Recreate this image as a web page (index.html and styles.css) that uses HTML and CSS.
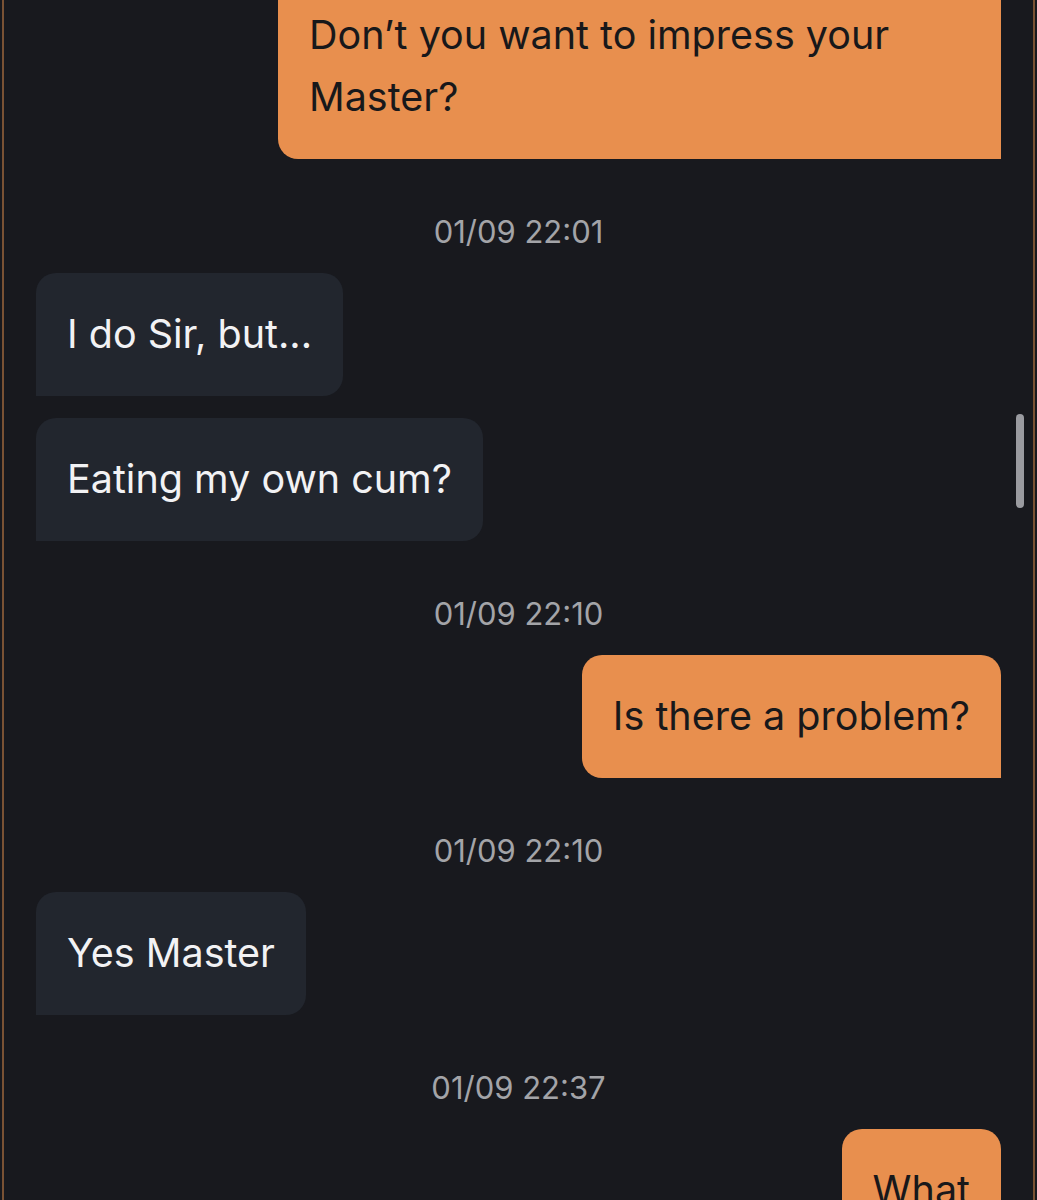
FILE: index.html
```html
<!DOCTYPE html>
<html lang="en">
<head>
  <meta charset="UTF-8" />
  <meta name="viewport" content="width=device-width, initial-scale=1.0"/>
  <title>Chat</title>
  <link rel="stylesheet" href="styles.css">
</head>
<body>

  <div class="frame">
    <div class="chat">
      <div class="bubble sent">Don’t you want to impress your Master?</div>

      <div class="time">01/09 22:01</div>
      <div class="bubble received">I do Sir, but...</div>
      <div class="bubble received">Eating my own cum?</div>

      <div class="time">01/09 22:10</div>
      <div class="bubble sent">Is there a problem?</div>

      <div class="time">01/09 22:10</div>
      <div class="bubble received">Yes Master</div>

      <div class="time">01/09 22:37</div>
      <div class="bubble sent">What</div>
    </div>
    <div class="scrollbar"></div>
  </div>

</body>
</html>
```

FILE: styles.css
```css
html, body {
  margin: 0;
  padding: 0;
  background-color: #18191e;
  height: 100%;
  overflow: hidden;
}

body {
  font-family: 'Inter', 'Liberation Sans', sans-serif;
}

.frame {
  position: relative;
  height: 100vh;
  margin: 0 2px 0 2px;
  border-left: 2px solid #7a5234;
  border-right: 2px solid #7a5234;
  background-color: #18191e;
  overflow: hidden;
}

.chat {
  display: flex;
  flex-direction: column;
  gap: 22px;
  padding: 0 32px 0 32px;
  margin-top: -26px;
}

.bubble {
  box-sizing: border-box;
  max-width: 723px;
  padding: 30px 31px 31px 31px;
  font-size: 39.5px;
  line-height: 62px;
  border-radius: 20px;
}

.sent {
  align-self: flex-end;
  background-color: #e88f4e;
  color: #18181a;
  border-bottom-right-radius: 0;
}

.received {
  align-self: flex-start;
  background-color: #22262e;
  color: #f2f2f4;
  border-bottom-left-radius: 0;
}

.time {
  text-align: center;
  color: #a3a4a8;
  font-size: 31px;
  line-height: 40px;
  margin: 31px 0 -1px 0;
}

.scrollbar {
  position: absolute;
  top: 414px;
  right: 9px;
  width: 8px;
  height: 94px;
  border-radius: 4px;
  background-color: #9a9ba0;
}
```
